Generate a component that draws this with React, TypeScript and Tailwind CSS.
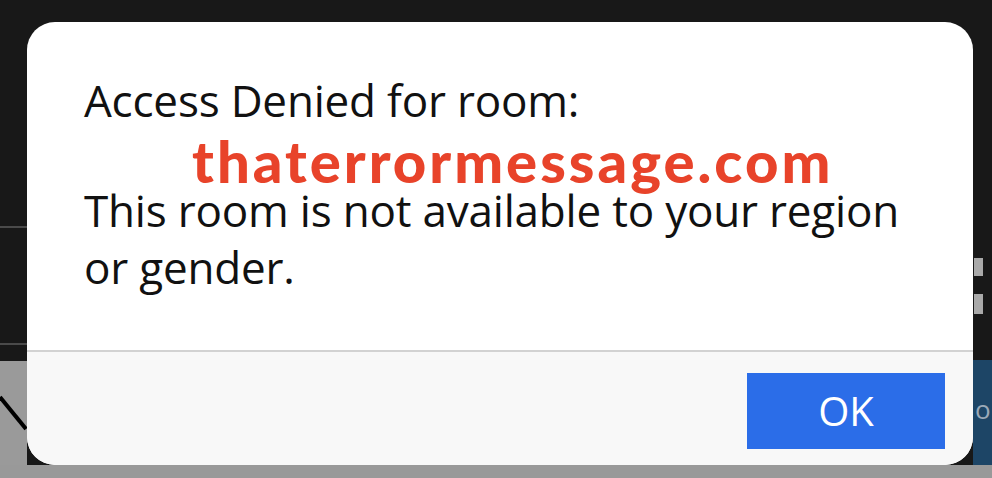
import React from "react";

function LeftEdge() {
  return (
    <div className="w-[27px] flex flex-col">
      <div className="h-[204px] bg-[#181818]" />
      <div className="h-[2px] bg-[#4a4a4a]" />
      <div className="h-[115px] bg-[#181818]" />
      <div className="h-[2px] bg-[#4a4a4a]" />
      <div className="h-[16px] bg-[#181818]" />
      <div className="flex-1 bg-[#9a9a9a]">
        <svg width="27" height="104" viewBox="0 0 27 104">
          <path d="M0 36 L26 68" stroke="#000" strokeWidth="4" fill="none" />
        </svg>
      </div>
    </div>
  );
}

function RightEdge() {
  return (
    <div className="w-[19px] flex flex-col">
      <div className="h-[236px] bg-[#181818]" />
      <div className="h-[18px] bg-[#181818] pl-[1px]">
        <div className="w-[9px] h-[18px] bg-[#a9a9a9]" />
      </div>
      <div className="h-[18px] bg-[#181818]" />
      <div className="h-[20px] bg-[#181818] pl-[1px]">
        <div className="w-[9px] h-[20px] bg-[#a9a9a9]" />
      </div>
      <div className="h-[46px] bg-[#181818]" />
      <div className="flex-1 bg-[#1d4566] pt-[36px] pl-[2px] text-[#9aa9b8] text-[26px] leading-none">
        <span style={{ fontFamily: "'Open Sans', sans-serif" }}>o</span>
      </div>
    </div>
  );
}

export default function App() {
  return (
    <div className="w-[992px] h-[478px] flex flex-col bg-[#181818] overflow-hidden">
      <div className="h-[22px] bg-[#181818]" />
      <div className="flex h-[443px]">
        <LeftEdge />
        {/* Dialog */}
        <div className="relative w-[946px] rounded-[28px] bg-white flex flex-col overflow-hidden">
          <div
            className="h-[328px] pl-[57px] pt-[50px] text-[#111] text-[44px] leading-[57px] tracking-[-0.2px]"
            style={{ fontFamily: "'Open Sans', sans-serif" }}
          >
            <p>Access Denied for room:</p>
            <p className="mt-[53px]">This room is not available to your region</p>
            <p>or gender.</p>
          </div>
          <div className="h-[2px] bg-[#d2d2d2]" />
          <div className="flex-1 bg-[#f8f8f8] flex justify-end items-start pt-[21px] pr-[28px]">
            <button
              className="w-[198px] h-[76px] bg-[#2b6de8] text-white text-[40px] flex items-center justify-center"
              style={{ fontFamily: "'Open Sans', sans-serif" }}
            >
              OK
            </button>
          </div>
          {/* watermark */}
          <div
            className="absolute left-[165px] top-[117px] text-[#e8432a] text-[58px] font-black leading-[44px] tracking-[3px]"
            style={{ fontFamily: "Lato, sans-serif" }}
          >
            thaterrormessage.com
          </div>
        </div>
        <RightEdge />
      </div>
      <div className="flex-1 bg-[#999999]" />
    </div>
  );
}
